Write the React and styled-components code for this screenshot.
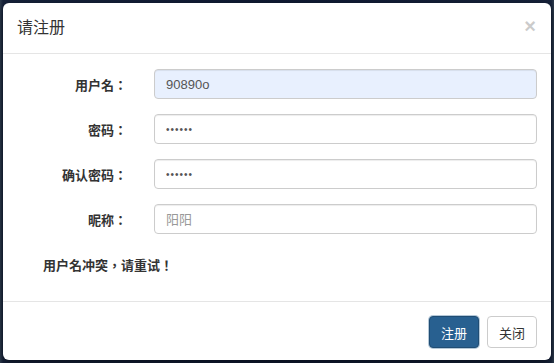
import React from 'react'
import styled, { createGlobalStyle } from 'styled-components'

const GlobalStyle = createGlobalStyle`
  html, body {
    margin: 0;
    padding: 0;
    background: #16223a;
    font-family: "Liberation Sans", "Noto Sans CJK TC", sans-serif;
  }
`

const Backdrop = styled.div`
  width: 554px;
  height: 363px;
  padding: 3px 3px 0 3px;
  box-sizing: border-box;
  background: linear-gradient(to right, #2d3b4c 0, #16223a 3px, #0f1a33 50%, #16223a calc(100% - 3px), #2d3b4c 100%);
`

const Modal = styled.div`
  background: #fff;
  border-radius: 6px;
  box-shadow: 0 3px 9px rgba(0, 0, 0, 0.5);
  overflow: hidden;
`

const Header = styled.div`
  display: flex;
  align-items: center;
  justify-content: space-between;
  padding: 15px 14px 15px 14px;
  border-bottom: 1px solid #e5e5e5;
`

const Title = styled.h4`
  margin: 0;
  font-size: 16px;
  line-height: 20px;
  font-weight: normal;
  color: #333;
  font-family: "Liberation Sans", "Noto Sans CJK SC", sans-serif;
`

const Close = styled.span`
  font-size: 20px;
  font-weight: bold;
  line-height: 20px;
  color: #000;
  opacity: 0.2;
  margin-right: 1px;
  margin-top: -4px;
`

const Body = styled.div`
  padding: 15px 14px 25px 0;
`

const Form = styled.div`
  display: grid;
  grid-template-columns: 124px 1fr;
  column-gap: 27px;
  row-gap: 15px;
  align-items: center;
`

const Label = styled.label`
  text-align: right;
  font-size: 13px;
  font-weight: bold;
  color: #333;
`

const Input = styled.input`
  box-sizing: border-box;
  width: 100%;
  height: 30px;
  padding: 0 11px;
  border: 1px solid #ccc;
  border-radius: 4px;
  box-shadow: inset 0 1px 1px rgba(0, 0, 0, 0.075);
  font-family: "Liberation Sans", "Noto Sans CJK SC", sans-serif;
  font-size: 13px;
  color: #555;
  background: ${p => (p.$filled ? '#e8f0fe' : '#fff')};
  outline: none;
  &::placeholder {
    color: #999;
  }
  &[type='password'] {
    font-size: 10px;
    letter-spacing: 1px;
  }
`

const Message = styled.p`
  margin: 22px 0 0 40px;
  font-size: 13px;
  line-height: 20px;
  font-weight: bold;
  color: #333;
`

const Footer = styled.div`
  display: flex;
  justify-content: flex-end;
  gap: 8px;
  padding: 14px 14px 12px;
  border-top: 1px solid #e5e5e5;
`

const Button = styled.button`
  height: 32px;
  padding: 0 11px;
  border-radius: 4px;
  font-family: "Liberation Sans", "Noto Sans CJK SC", sans-serif;
  font-size: 13px;
  border: 1px solid ${p => (p.$primary ? '#204d74' : '#ccc')};
  background: ${p => (p.$primary ? '#286090' : '#fff')};
  color: ${p => (p.$primary ? '#fff' : '#333')};
  box-shadow: ${p => (p.$primary ? '0 0 0 1px rgba(40, 96, 144, 0.35)' : 'none')};
`

export default function App() {
  return (
    <>
      <GlobalStyle />
      <Backdrop>
        <Modal>
          <Header>
            <Title>请注册</Title>
            <Close>×</Close>
          </Header>
          <Body>
            <Form>
              <Label>用户名：</Label>
              <Input $filled readOnly value="90890o" />
              <Label>密码：</Label>
              <Input type="password" readOnly value="123456" />
              <Label>确认密码：</Label>
              <Input type="password" readOnly value="123456" />
              <Label>昵称：</Label>
              <Input placeholder="阳阳" />
            </Form>
            <Message>用户名冲突，请重试！</Message>
          </Body>
          <Footer>
            <Button $primary>注册</Button>
            <Button>关闭</Button>
          </Footer>
        </Modal>
      </Backdrop>
    </>
  )
}
